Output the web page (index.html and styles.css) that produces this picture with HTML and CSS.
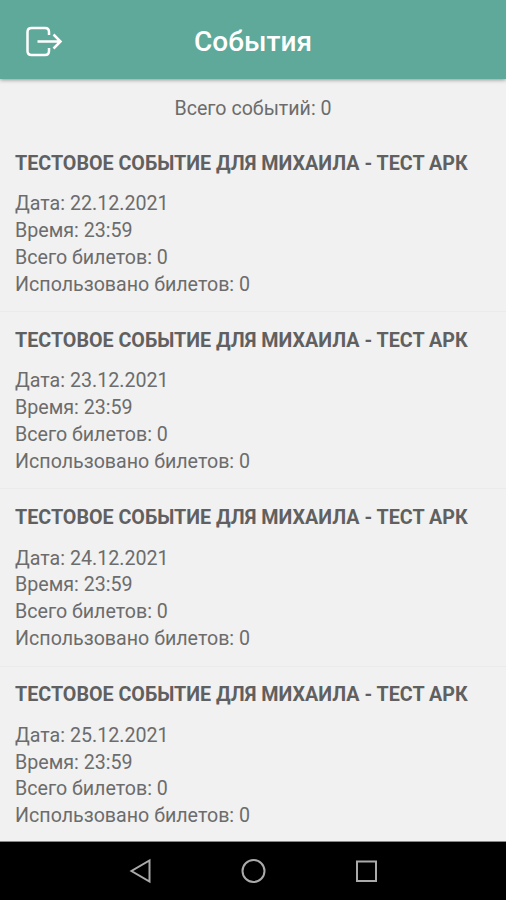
FILE: index.html
```html
<!DOCTYPE html>
<html lang="ru">
<head>
    <meta charset="UTF-8">
    <meta name="viewport" content="width=device-width, initial-scale=1.0">
    <title>События</title>
    <link rel="stylesheet" href="styles.css">
</head>
<body>
    <header class="header">
        <button class="logout-button" aria-label="Выйти">
            <svg width="38" height="32" viewBox="0 0 38 32">
                <path d="M24 9V6Q24 2 20 2H6.500Q2.500 2 2.500 6V25Q2.500 29 6.500 29H20Q24 29 24 25V22M12.500 15.500H35M28.500 8.500L35.500 15.500L28.500 22.500"/>
            </svg>
        </button>
        <h1>События</h1>
    </header>

    <main class="content">
        <p class="total">Всего событий: 0</p>

        <div class="event">
            <h2>ТЕСТОВОЕ СОБЫТИЕ ДЛЯ МИХАИЛА - ТЕСТ АРК</h2>
            <p>Дата: 22.12.2021</p>
            <p>Время: 23:59</p>
            <p>Всего билетов: 0</p>
            <p>Использовано билетов: 0</p>
        </div>
        <div class="event">
            <h2>ТЕСТОВОЕ СОБЫТИЕ ДЛЯ МИХАИЛА - ТЕСТ АРК</h2>
            <p>Дата: 23.12.2021</p>
            <p>Время: 23:59</p>
            <p>Всего билетов: 0</p>
            <p>Использовано билетов: 0</p>
        </div>
        <div class="event">
            <h2>ТЕСТОВОЕ СОБЫТИЕ ДЛЯ МИХАИЛА - ТЕСТ АРК</h2>
            <p>Дата: 24.12.2021</p>
            <p>Время: 23:59</p>
            <p>Всего билетов: 0</p>
            <p>Использовано билетов: 0</p>
        </div>
        <div class="event">
            <h2>ТЕСТОВОЕ СОБЫТИЕ ДЛЯ МИХАИЛА - ТЕСТ АРК</h2>
            <p>Дата: 25.12.2021</p>
            <p>Время: 23:59</p>
            <p>Всего билетов: 0</p>
            <p>Использовано билетов: 0</p>
        </div>
    </main>

    <nav class="navbar">
        <svg width="24" height="26" viewBox="0 0 24 26"><path d="M20.500 2.500V23.500L2.500 13Z"/></svg>
        <svg width="26" height="26" viewBox="0 0 26 26"><circle cx="13.500" cy="13" r="11"/></svg>
        <svg width="24" height="26" viewBox="0 0 24 26"><rect x="4" y="3.500" width="19" height="19.500"/></svg>
    </nav>
</body>
</html>
```
FILE: styles.css
```css
:root {
    --primary-color: #5ea99a;
    --background-color: #f1f1f1;
    --text-color: #6c6c6c;
    --title-color: #606060;
}

* {
    margin: 0;
    padding: 0;
    box-sizing: border-box;
}

body {
    display: flex;
    flex-direction: column;
    height: 100vh;
    overflow: hidden;
    font-family: Roboto, sans-serif;
    background-color: var(--background-color);
    color: var(--text-color);
}

.header {
    display: grid;
    grid-template-columns: 70px 1fr 70px;
    align-items: center;
    height: 79px;
    flex-shrink: 0;
    padding-top: 4px;
    background-color: var(--primary-color);
    box-shadow: 0 1px 4px rgba(0, 0, 0, 0.4);
    color: #fff;
    text-align: center;
}

.logout-button {
    display: flex;
    margin-left: 25px;
    border: none;
    background: none;
}

svg {
    fill: none;
    overflow: visible;
    stroke: #fff;
    stroke-width: 2.5;
}

.header h1 {
    font-size: 28px;
    font-weight: 500;
}

.content {
    flex: 1;
    overflow: hidden;
}

.total {
    padding-top: 16px;
    height: 56px;
    font-size: 19.6px;
    line-height: 27px;
    text-align: center;
}

.event {
    height: 177.2px;
    padding: 15.6px 15px 0;
    border-bottom: 1px solid #ebebeb;
    font-size: 19.65px;
    line-height: 26.8px;
}

.event h2 {
    margin-bottom: 13.8px;
    color: var(--title-color);
    font-size: 19.7px;
    font-weight: 700;
    white-space: nowrap;
}

.navbar {
    display: flex;
    flex-shrink: 0;
    justify-content: center;
    align-items: center;
    gap: 87px;
    height: 59px;
    border-top: 1px solid #888;
    background-color: #000;
}

.navbar svg {
    stroke: #aaa;
    stroke-width: 2;
}
```
